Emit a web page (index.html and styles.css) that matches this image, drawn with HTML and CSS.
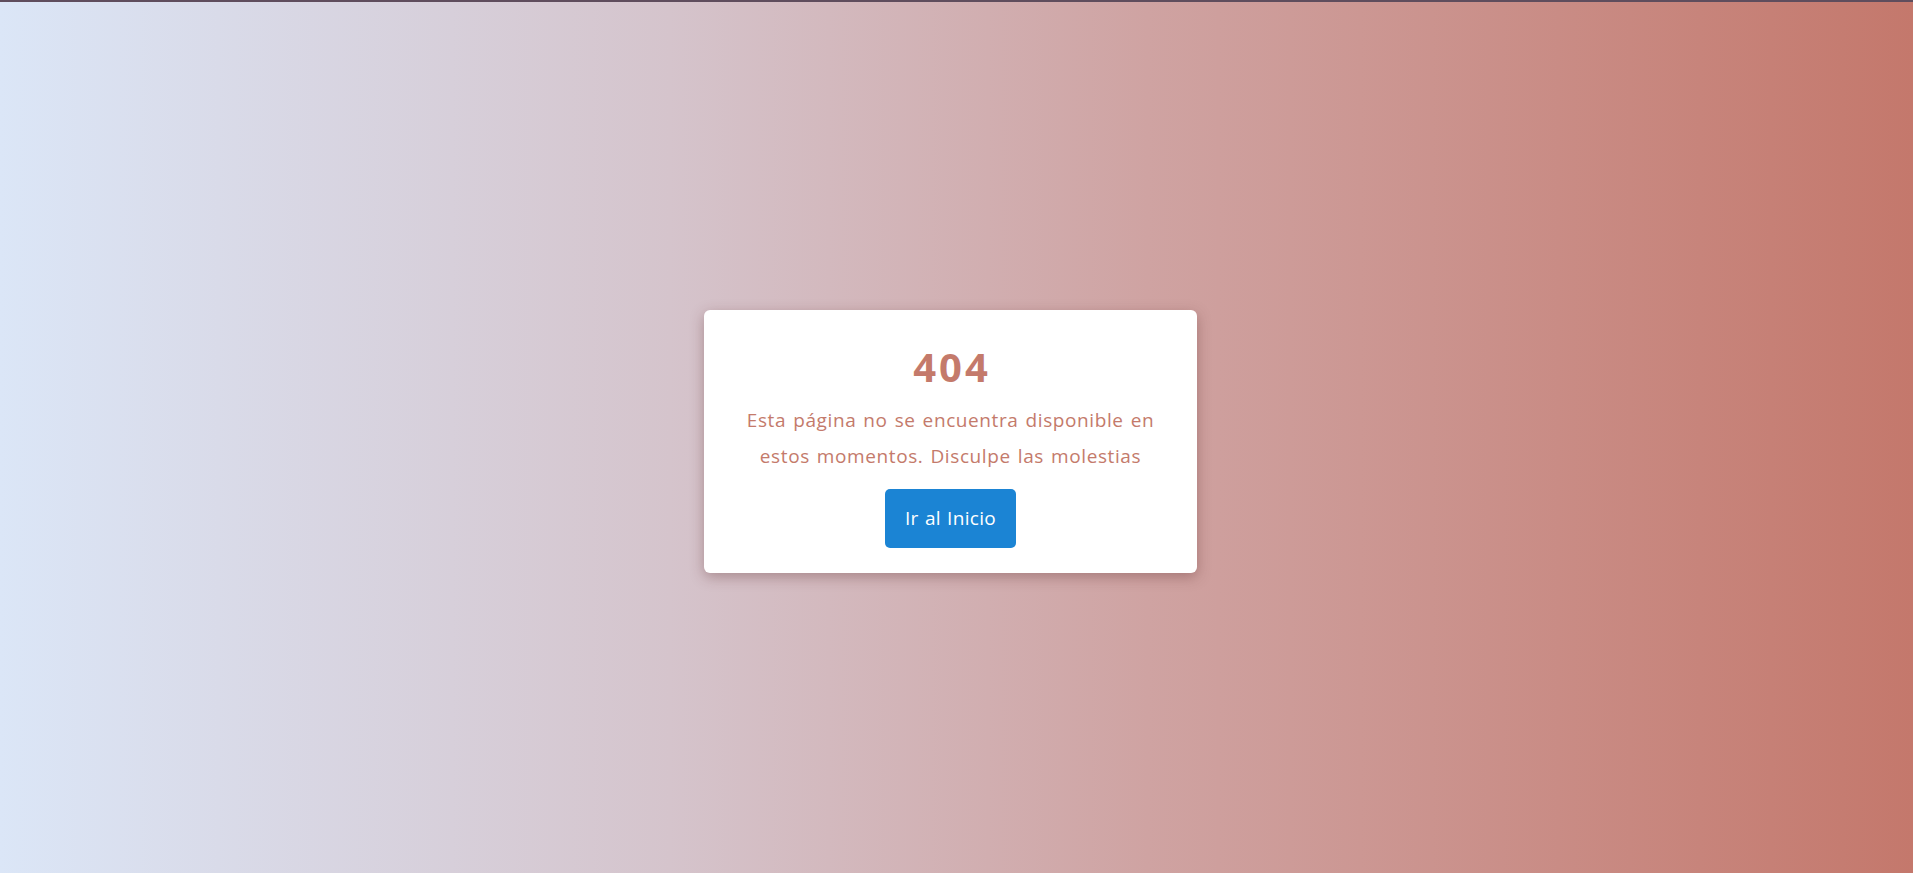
FILE: index.html
```html
<!DOCTYPE html>
<html lang="es">
<head>
<meta charset="utf-8">
<title>404</title>
<link rel="stylesheet" href="styles.css">
</head>
<body>
<main class="page">
  <section class="card">
    <h1 class="code">404</h1>
    <p class="message">Esta página no se encuentra disponible en estos momentos. Disculpe las molestias</p>
    <a class="btn" href="#">Ir al Inicio</a>
  </section>
</main>
</body>
</html>
```
FILE: styles.css
```css
html, body {
  margin: 0;
  padding: 0;
  height: 100%;
}
body {
  font-family: "Open Sans", "Noto Sans", sans-serif;
  border-top: 2px solid #5f4d5d;
  box-sizing: border-box;
  background: linear-gradient(90deg, #dbe6f7 0%, #d5c4cc 35%, #cfa3a2 60%, #c4786c 100%);
}
.page {
  height: 100%;
  display: flex;
  align-items: center;
  justify-content: center;
  padding-right: 12px;
  padding-top: 8px;
  box-sizing: border-box;
}
.card {
  width: 493px;
  box-sizing: border-box;
  background: #fff;
  border-radius: 6px;
  box-shadow: 0 4px 14px rgba(90, 40, 40, 0.35);
  padding: 33px 30px 25px;
  display: flex;
  flex-direction: column;
  align-items: center;
  text-align: center;
  color: #c47a6b;
}
.code {
  margin: 0;
  font-size: 40px;
  font-weight: 700;
  line-height: 48px;
  letter-spacing: 3px;
  padding-left: 3px;
}
.message {
  margin: 11px 0 15px;
  font-size: 19px;
  line-height: 36px;
  letter-spacing: 0.6px;
  word-spacing: 1.5px;
  max-width: 425px;
}
.btn {
  background: #1b84d4;
  color: #fff;
  text-decoration: none;
  font-size: 19px;
  line-height: 27px;
  letter-spacing: 0.3px;
  word-spacing: 1px;
  padding: 16px 20px;
  border-radius: 5px;
}
```
